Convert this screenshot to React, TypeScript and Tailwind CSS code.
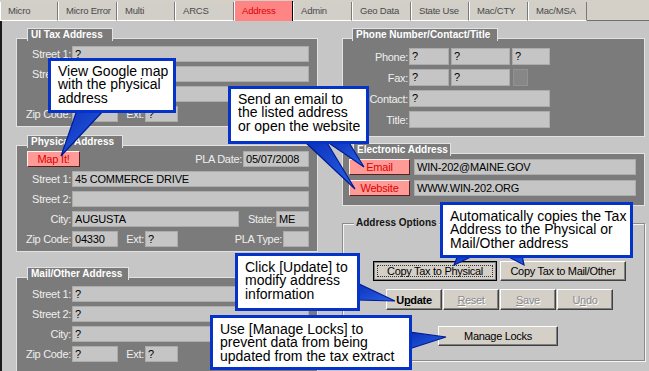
import React from "react";

const LBL =
  "text-[11px] tracking-[-0.3px] text-[#eeeeee] leading-[16px] whitespace-nowrap text-right shrink-0";

function Field({ w, children }: { w: string; children?: React.ReactNode }) {
  return (
    <div
      className={`${w} h-full shrink-0 bg-[#c5c5c5] border border-[#acacac] px-[2px] text-[11px] leading-[15px] tracking-[-0.2px] text-black whitespace-nowrap overflow-hidden`}
    >
      {children}
    </div>
  );
}

function Row({ label, children }: { label?: string; children?: React.ReactNode }) {
  return (
    <div className="flex h-[16px] items-center">
      <div className={`${LBL} w-[54px] mr-[1px]`}>{label}</div>
      {children}
    </div>
  );
}

function PRow({ label, children }: { label?: string; children?: React.ReactNode }) {
  return (
    <div className="flex h-[17px] items-center">
      <div className={`${LBL} w-[65px] mr-[1px]`}>{label}</div>
      {children}
    </div>
  );
}

function Group({
  title,
  tw,
  tl,
  box,
  children,
}: {
  title: string;
  tw: string;
  tl: string;
  box: string;
  children: React.ReactNode;
}) {
  return (
    <div className="flex flex-col">
      <div
        className={`relative z-10 self-start ${tl} ${tw} h-[13px] bg-[#7b7b7b] border-t border-l border-r border-[#e2e2e2] pl-[3px] text-[10px] font-bold text-white leading-[12px] whitespace-nowrap`}
      >
        {title}
      </div>
      <div className={`-mt-[3px] border border-[#e2e2e2] bg-[#7b7b7b] ${box}`}>{children}</div>
    </div>
  );
}

function RedBtn({ className, children }: { className: string; children: React.ReactNode }) {
  return (
    <div
      className={`${className} h-full shrink-0 bg-[#ff9b96] border border-t-[#fff0f0] border-l-[#fff0f0] border-r-[#5a2020] border-b-[#5a2020] flex items-center justify-center text-[11px] tracking-[-0.2px] text-[#e00000] leading-[14px]`}
    >
      {children}
    </div>
  );
}

function WinBtn({
  className,
  disabled,
  bold,
  children,
}: {
  className: string;
  disabled?: boolean;
  bold?: boolean;
  children: React.ReactNode;
}) {
  return (
    <div
      className={`${className} shrink-0 bg-[#d4d0c8] border border-t-white border-l-white border-r-[#404040] border-b-[#404040] shadow-[inset_-1px_-1px_0_#808080] flex items-center justify-center text-[11px] tracking-[-0.3px] leading-[14px] ${
        disabled ? "text-[#8a8a8a] [text-shadow:1px_1px_0_#ffffff]" : "text-black"
      } ${bold ? "font-bold text-[10px]" : ""}`}
    >
      {children}
    </div>
  );
}

const tabs: [string, string][] = [
  ["Micro", "w-[58px]"],
  ["Micro Error", "w-[59px]"],
  ["Multi", "w-[58px]"],
  ["ARCS", "w-[59px]"],
  ["Address", "w-[59px]"],
  ["Admin", "w-[59px]"],
  ["Geo Data", "w-[59px]"],
  ["State Use", "w-[58px]"],
  ["Mac/CTY", "w-[59px]"],
  ["Mac/MSA", "w-[59px]"],
];

function Callout({ className, lines }: { className: string; lines: string[] }) {
  return (
    <div
      className={`absolute z-30 bg-white border-[3px] border-[#0533c9] pl-[7px] text-[14px] leading-[13.3px] text-black whitespace-nowrap ${className}`}
    >
      {lines.map((l, i) => (
        <div key={i}>{l}</div>
      ))}
    </div>
  );
}

export default function App() {
  return (
    <div className="relative w-[649px] h-[371px] overflow-hidden bg-[#d4d0c8] font-[family-name:'Liberation_Sans',Arial,sans-serif]">
      {/* Tabs */}
      <div className="flex h-[21px] items-end">
        {tabs.map(([t, w]) =>
          t === "Address" ? (
            <div
              key={t}
              className={`${w} h-[20px] bg-[#ff8585] border-l border-white border-r border-r-black pl-[7px] text-[9.5px] tracking-[-0.2px] text-[#e00000] leading-[19px] whitespace-nowrap`}
            >
              {t}
            </div>
          ) : (
            <div
              key={t}
              className={`${w} h-[19px] bg-[#d2cec8] border-l border-white border-r border-r-[#7a7a7a] border-b border-b-white pl-[7px] text-[9.5px] tracking-[-0.2px] text-[#4a4a4a] leading-[18px] whitespace-nowrap`}
            >
              {t}
            </div>
          )
        )}
        <div className="flex-1 h-[21px] border-b border-[#707070]"></div>
      </div>

      {/* Page */}
      <div className="flex h-[350px] border-l-2 border-[#1a1a1a] bg-[#c6c6c6]">
        {/* Left column */}
        <div className="w-[302px] ml-[14px] pt-[7px] flex flex-col shrink-0">
          <Group title="UI Tax Address" tw="w-[86px]" tl="ml-[11px]" box="pt-[7px] pb-[4px] flex flex-col gap-[4px]">
            <Row label="Street 1:">
              <Field w="w-[237px]">?</Field>
            </Row>
            <Row label="Street 2:">
              <Field w="w-[237px]"></Field>
            </Row>
            <Row label="City:">
              <Field w="w-[167px]"></Field>
              <div className={`${LBL} w-[36px] mr-[1px]`}>State:</div>
              <Field w="w-[33px]"></Field>
            </Row>
            <Row label="Zip Code:">
              <Field w="w-[46px]">?</Field>
              <div className={`${LBL} w-[26px] mr-[1px]`}>Ext:</div>
              <Field w="w-[33px]">?</Field>
            </Row>
          </Group>

          <div className="mt-[8px]">
            <Group title="Physical Address" tw="w-[96px]" tl="ml-[11px]" box="pt-[5px] pb-[4px] flex flex-col gap-[4px]">
              <div className="flex h-[16px] items-center">
                <RedBtn className="ml-[10px] w-[53px]">Map It!</RedBtn>
                <div className={`${LBL} w-[162px] mr-[1px]`}>PLA Date:</div>
                <Field w="w-[66px]">05/07/2008</Field>
              </div>
              <Row label="Street 1:">
                <Field w="w-[237px]">45 COMMERCE DRIVE</Field>
              </Row>
              <Row label="Street 2:">
                <Field w="w-[237px]"></Field>
              </Row>
              <Row label="City:">
                <Field w="w-[167px]">AUGUSTA</Field>
                <div className={`${LBL} w-[36px] mr-[1px]`}>State:</div>
                <Field w="w-[33px]">ME</Field>
              </Row>
              <Row label="Zip Code:">
                <Field w="w-[46px]">04330</Field>
                <div className={`${LBL} w-[26px] mr-[1px]`}>Ext:</div>
                <Field w="w-[33px]">?</Field>
                <div className={`${LBL} w-[104px] mr-[1px]`}>PLA Type:</div>
                <Field w="w-[26px]"></Field>
              </Row>
            </Group>
          </div>

          <div className="mt-[15px]">
            <Group title="Mail/Other Address" tw="w-[102px]" tl="ml-[11px]" box="pt-[8px] pb-[12px] flex flex-col gap-[4px]">
              <Row label="Street 1:">
                <Field w="w-[237px]">?</Field>
              </Row>
              <Row label="Street 2:">
                <Field w="w-[237px]">?</Field>
              </Row>
              <Row label="City:">
                <Field w="w-[237px]">?</Field>
              </Row>
              <Row label="Zip Code:">
                <Field w="w-[46px]">?</Field>
                <div className={`${LBL} w-[26px] mr-[1px]`}>Ext:</div>
                <Field w="w-[33px]">?</Field>
              </Row>
            </Group>
          </div>
        </div>

        {/* Right column */}
        <div className="w-[303px] ml-[24px] pt-[7px] flex flex-col shrink-0">
          <Group title="Phone Number/Contact/Title" tw="w-[146px]" tl="ml-[10px]" box="pt-[9px] pb-[8px] flex flex-col gap-[4px]">
            <PRow label="Phone:">
              <Field w="w-[40px]">?</Field>
              <div className="w-[2px]" />
              <Field w="w-[59px]">?</Field>
              <div className="w-[2px]" />
              <Field w="w-[38px]">?</Field>
            </PRow>
            <PRow label="Fax:">
              <Field w="w-[40px]">?</Field>
              <div className="w-[2px]" />
              <Field w="w-[59px]">?</Field>
              <div className="ml-[3px] w-[15px] h-full bg-[#878787] border border-[#939393]" />
            </PRow>
            <PRow label="Contact:">
              <Field w="w-[141px]">?</Field>
            </PRow>
            <PRow label="Title:">
              <Field w="w-[141px]"></Field>
            </PRow>
          </Group>

          <div className="mt-[6px]">
            <Group title="Electronic Address" tw="w-[98px]" tl="ml-[11px]" box="pt-[5px] pb-[9px] flex flex-col gap-[5px]">
              <div className="flex h-[16px] items-center">
                <RedBtn className="ml-[6px] w-[61px]">Email</RedBtn>
                <div className="w-[4px]" />
                <Field w="w-[222px]">WIN-202@MAINE.GOV</Field>
              </div>
              <div className="flex h-[16px] items-center">
                <RedBtn className="ml-[6px] w-[61px]">Website</RedBtn>
                <div className="w-[4px]" />
                <Field w="w-[222px]">WWW.WIN-202.ORG</Field>
              </div>
            </Group>
          </div>

          {/* Address Options */}
          <div className="mt-[11px] flex flex-col">
            <div className="relative z-10 self-start ml-[12px] px-[2px] h-[12px] bg-[#c6c6c6] text-[10px] font-bold text-[#151515] leading-[12px] whitespace-nowrap">
              Address Options
            </div>
            <div className="-mt-[6px] border border-[#8a8a8a] shadow-[inset_1px_1px_0_#f4f4f4,1px_1px_0_#f4f4f4] pt-[37px] pb-[14px] flex flex-col">
              <div className="flex ml-[30px] h-[20px] gap-[3px]">
                <div className="w-[124px] h-full border border-black shrink-0">
                  <div className="w-full h-full border border-[#808080] bg-[#d4d0c8] flex items-center justify-center p-[2px]">
                    <div className="w-full h-full border border-dotted border-[#333] flex items-center justify-center text-[11px] tracking-[-0.3px] leading-[14px] text-black">
                      Copy Tax to Physical
                    </div>
                  </div>
                </div>
                <WinBtn className="w-[126px] h-full">Copy Tax to Mail/Other</WinBtn>
              </div>
              <div className="flex ml-[43px] mt-[8px] h-[21px] gap-[1px]">
                <WinBtn className="w-[56px] h-full" bold>
                  <span>
                    U<span className="underline">p</span>date
                  </span>
                </WinBtn>
                <WinBtn className="w-[56px] h-full" disabled>
                  <span>
                    <span className="underline">R</span>eset
                  </span>
                </WinBtn>
                <WinBtn className="w-[56px] h-full" disabled>
                  <span>
                    <span className="underline">S</span>ave
                  </span>
                </WinBtn>
                <WinBtn className="w-[56px] h-full" disabled>
                  <span>
                    U<span className="underline">n</span>do
                  </span>
                </WinBtn>
              </div>
              <div className="flex ml-[95px] mt-[16px] h-[20px]">
                <WinBtn className="w-[120px] h-full">Manage Locks</WinBtn>
              </div>
            </div>
          </div>
        </div>
      </div>

      {/* Callout pointers */}
      <svg
        className="absolute left-0 top-0 z-20 pointer-events-none"
        width="649"
        height="371"
        viewBox="0 0 649 371"
      >
        <defs>
          <linearGradient id="pg" x1="0" y1="0" x2="1" y2="1">
            <stop offset="0" stopColor="#0a2fb8" />
            <stop offset="1" stopColor="#2a63e6" />
          </linearGradient>
        </defs>
        <g fill="url(#pg)" stroke="#001c94" strokeWidth="1.2" strokeLinejoin="miter">
          <polygon points="77,110 104,110 61,156" />
          <polygon points="304,141 326,141 355,189" />
          <polygon points="326,141 348,141 364,167" />
          <polygon points="458,255 475,255 454,265" />
          <polygon points="505,255 522,255 524,265" />
          <polygon points="357,283 357,300 395,301" />
          <polygon points="409,332 409,349 446,337" />
        </g>
      </svg>

      <Callout
        className="left-[48px] top-[58px] w-[128px] h-[55px] pt-[4px]"
        lines={["View Google map", "with the physical", "address"]}
      />
      <Callout
        className="left-[228px] top-[86px] w-[141px] h-[58px] pt-[4px]"
        lines={["Send an email to", "the listed address", "or open the website"]}
      />
      <Callout
        className="left-[440px] top-[202px] w-[193px] h-[56px] pt-[5px]"
        lines={["Automatically copies the Tax", "Address to the Physical or", "Mail/Other address"]}
      />
      <Callout
        className="left-[235px] top-[253px] w-[125px] h-[58px] pt-[5px]"
        lines={["Click [Update] to", "modify address", "information"]}
      />
      <Callout
        className="left-[210px] top-[315px] w-[202px] h-[55px] pt-[5px]"
        lines={["Use [Manage Locks] to", "prevent data from being", "updated from the tax extract"]}
      />
    </div>
  );
}
